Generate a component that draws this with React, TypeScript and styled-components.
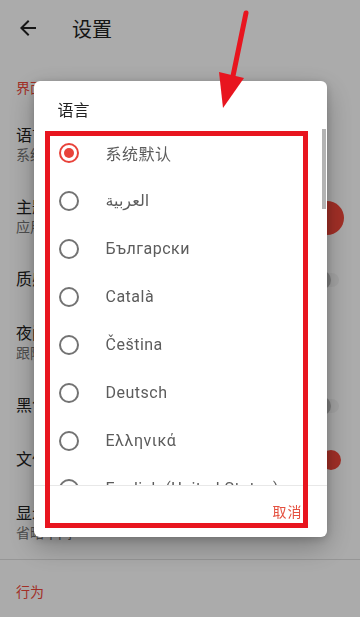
import React from 'react'
import styled, { createGlobalStyle } from 'styled-components'

const GlobalStyle = createGlobalStyle`
	html, body {
		margin: 0;
		padding: 0;
		background: #ffffff;
	}
	body {
		font-family: Roboto, 'Noto Sans CJK SC', 'DejaVu Sans', sans-serif;
		-webkit-font-smoothing: antialiased;
	}
`

const accent = '#f2473a'
const markRed = '#e8151f'

const Page = styled.div`
	position: relative;
	width: 360px;
	height: 617px;
	overflow: hidden;
	background: #ffffff;
`

const Toolbar = styled.header`
	height: 56px;
	display: flex;
	align-items: center;
	padding: 0 16px;
	gap: 32px;
	box-sizing: border-box;
`

const ToolbarTitle = styled.h1`
	margin: 0;
	font-size: 20px;
	font-weight: 400;
	color: #212121;
`

const SectionHeader = styled.div`
	padding: 22px 16px 11px;
	font-size: 14px;
	line-height: 20px;
	color: ${accent};
`

const PrefRow = styled.div<{ $twoLine?: boolean }>`
	display: flex;
	align-items: center;
	padding: ${(p) => (p.$twoLine ? '17px 16px 16px' : '17px 16px')};
	gap: 16px;
`

const PrefText = styled.div`
	flex: 1;
	min-width: 0;
	display: flex;
	flex-direction: column;
	overflow: hidden;
`

const PrefTitle = styled.div`
	font-size: 16px;
	line-height: 20px;
	color: #212121;
	white-space: nowrap;
`

const PrefSummary = styled.div`
	font-size: 14px;
	line-height: 19px;
	color: #757575;
	white-space: nowrap;
`

const ColorDot = styled.span`
	width: 34px;
	height: 34px;
	border-radius: 50%;
	background: ${accent};
	flex-shrink: 0;
`

const SwitchTrack = styled.span<{ $on?: boolean }>`
	position: relative;
	width: 30px;
	height: 20px;
	margin-right: 3px;
	flex-shrink: 0;
	display: flex;
	align-items: center;
	justify-content: ${(p) => (p.$on ? 'flex-end' : 'flex-start')};

	&::before {
		content: '';
		position: absolute;
		left: 2px;
		right: 2px;
		top: 3px;
		height: 14px;
		border-radius: 7px;
		background: ${(p) => (p.$on ? '#f8b4ae' : '#f4f4f4')};
	}
`

const SwitchThumb = styled.span<{ $on?: boolean }>`
	position: relative;
	width: 20px;
	height: 20px;
	border-radius: 50%;
	background: ${(p) => (p.$on ? accent : '#bdbdbd')};
`

const Divider = styled.div`
	height: 1px;
	background: #e0e0e0;
`

const Scrim = styled.div`
	position: fixed;
	inset: 0;
	background: rgba(0, 0, 0, 0.33);
	display: flex;
	align-items: center;
	justify-content: center;
`

const Dialog = styled.div`
	position: relative;
	width: 293px;
	height: 456px;
	background: #ffffff;
	border-radius: 6px;
	box-shadow: 0 10px 28px rgba(0, 0, 0, 0.28), 0 2px 8px rgba(0, 0, 0, 0.18);
	display: flex;
	flex-direction: column;
`

const DialogTitle = styled.div`
	padding: 20px 24px 8px;
	font-size: 16px;
	line-height: 20px;
	color: #212121;
`

const ChoiceList = styled.div`
	position: relative;
	height: 356px;
	overflow: hidden;
	border-bottom: 1px solid #e8e8e8;
`

const ScrollThumb = styled.span`
	position: absolute;
	top: 0;
	right: 1px;
	width: 4px;
	height: 80px;
	background: #b3b3b3;
`

const Choice = styled.div`
	height: 48px;
	display: flex;
	align-items: center;
	gap: 27px;
	padding-left: 25px;
	font-size: 16px;
	letter-spacing: 0.5px;
	color: #5c5c5c;
	white-space: nowrap;
`

const Radio = styled.span<{ $checked?: boolean }>`
	width: 20px;
	height: 20px;
	box-sizing: border-box;
	border-radius: 50%;
	border: 2px solid ${(p) => (p.$checked ? '#e8423a' : '#737373')};
	display: flex;
	align-items: center;
	justify-content: center;
	flex-shrink: 0;

	&::after {
		content: '';
		width: 10px;
		height: 10px;
		border-radius: 50%;
		background: #e8423a;
		display: ${(p) => (p.$checked ? 'block' : 'none')};
	}
`

const DialogActions = styled.div`
	flex: 1;
	display: flex;
	align-items: center;
	justify-content: flex-end;
	padding-right: 24px;
`

const TextButton = styled.button`
	border: none;
	background: none;
	padding: 0;
	font-family: inherit;
	font-size: 14px;
	letter-spacing: 1px;
	color: #e4503f;
`

const MarkBox = styled.div`
	position: absolute;
	left: 11px;
	top: 50px;
	width: 263px;
	height: 397px;
	box-sizing: border-box;
	border: 5px solid ${markRed};
	pointer-events: none;
`

const MarkArrow = styled.svg`
	position: absolute;
	left: 0;
	top: 0;
	pointer-events: none;
`

const languages = [
	'系统默认',
	'العربية',
	'Български',
	'Català',
	'Čeština',
	'Deutsch',
	'Ελληνικά',
	'English (United States)',
	'Español',
	'Français',
	'Magyar',
	'Italiano',
]

const BackIcon = () => (
	<svg width="24" height="24" viewBox="0 0 24 24">
		<path
			fill="#212121"
			d="M20 11H7.83l5.59-5.59L12 4l-8 8 8 8 1.41-1.41L7.83 13H20v-2z"
		/>
	</svg>
)

export default function App() {
	return (
		<Page>
			<GlobalStyle />
			<Toolbar>
				<BackIcon />
				<ToolbarTitle>设置</ToolbarTitle>
			</Toolbar>

			<SectionHeader>界面</SectionHeader>
			<PrefRow $twoLine>
				<PrefText>
					<PrefTitle>语言</PrefTitle>
					<PrefSummary>系统默认</PrefSummary>
				</PrefText>
			</PrefRow>
			<PrefRow $twoLine>
				<PrefText>
					<PrefTitle>主题颜色</PrefTitle>
					<PrefSummary>应用的主题颜色</PrefSummary>
				</PrefText>
				<ColorDot />
			</PrefRow>
			<PrefRow>
				<PrefText>
					<PrefTitle>质感设计 3</PrefTitle>
				</PrefText>
				<SwitchTrack>
					<SwitchThumb />
				</SwitchTrack>
			</PrefRow>
			<PrefRow $twoLine>
				<PrefText>
					<PrefTitle>夜间模式</PrefTitle>
					<PrefSummary>跟随系统</PrefSummary>
				</PrefText>
			</PrefRow>
			<PrefRow>
				<PrefText>
					<PrefTitle>黑色夜间主题</PrefTitle>
				</PrefText>
				<SwitchTrack>
					<SwitchThumb />
				</SwitchTrack>
			</PrefRow>
			<PrefRow>
				<PrefText>
					<PrefTitle>文件列表动画</PrefTitle>
				</PrefText>
				<SwitchTrack $on>
					<SwitchThumb $on />
				</SwitchTrack>
			</PrefRow>
			<PrefRow $twoLine>
				<PrefText>
					<PrefTitle>显示文件名省略位置</PrefTitle>
					<PrefSummary>省略中间</PrefSummary>
				</PrefText>
			</PrefRow>
			<Divider />
			<SectionHeader>行为</SectionHeader>

			<Scrim>
				<Dialog>
					<DialogTitle>语言</DialogTitle>
					<ChoiceList>
						{languages.map((lang, i) => (
							<Choice key={lang}>
								<Radio $checked={i === 0} />
								<span>{lang}</span>
							</Choice>
						))}
						<ScrollThumb />
					</ChoiceList>
					<DialogActions>
						<TextButton>取消</TextButton>
					</DialogActions>
					<MarkBox />
				</Dialog>
			</Scrim>

			<MarkArrow width="360" height="120" viewBox="0 0 360 120">
				<line
					x1="246"
					y1="13"
					x2="233"
					y2="76"
					stroke={markRed}
					strokeWidth="5"
					strokeLinecap="round"
				/>
				<polygon points="219,72 244,78 223,108" fill={markRed} />
			</MarkArrow>
		</Page>
	)
}
